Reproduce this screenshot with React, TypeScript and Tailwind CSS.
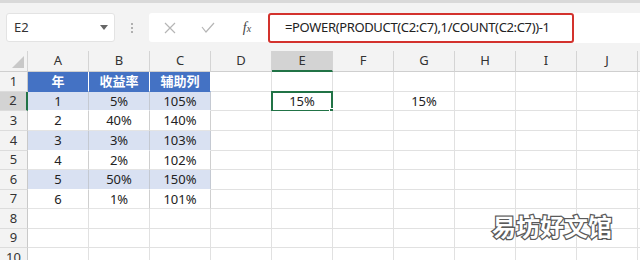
import React from "react";

const COLS = ["A", "B", "C", "D", "E", "F", "G", "H", "I", "J"];
const ROW_H = ["h-[20px]", "h-[19px]", "h-[20px]", "h-[20px]", "h-[19px]", "h-[20px]", "h-[19px]", "h-[20px]", "h-[19px]", "h-[20px]"];

const table: string[][] = [
  ["年", "收益率", "辅助列"],
  ["1", "5%", "105%"],
  ["2", "40%", "140%"],
  ["3", "3%", "103%"],
  ["4", "2%", "102%"],
  ["5", "50%", "150%"],
  ["6", "1%", "101%"],
];

function Cell({ r, c }: { r: number; c: number }) {
  const inTable = r < 7 && c < 3;
  let cls = "relative w-[61px] shrink-0 flex items-center justify-center border-r border-b ";
  let text = "";
  if (inTable) {
    text = table[r][c];
    if (r === 0) {
      cls += "bg-[#4472c4] text-white font-bold border-r-white border-b-[#4472c4] ";
    } else if (r % 2 === 1) {
      cls += "bg-[#d9e1f2] text-[#222] border-r-[#c4c9d2] border-b-[#ffffff] ";
    } else {
      cls += "bg-white text-[#222] border-r-[#cfcfcf] border-b-[#e4e4e4] ";
    }
    if (c === 2) cls += "border-r-[#a9a9a9] ";
    if (r === 6) cls += "border-b-[#bdbdbd] ";
  } else {
    cls += "bg-white border-r-[#e1e1e1] border-b-[#e1e1e1] text-[#222] ";
  }
  if (r === 1 && (c === 4 || c === 6)) text = "15%";
  return (
    <div className={cls}>
      <span className="leading-none">{text}</span>
      {r === 1 && c === 4 && (
        <div className="absolute -left-[1px] -top-[1px] w-[62px] h-[21px] border-2 border-[#217346]">
          <div className="absolute -right-[4px] -bottom-[4px] w-[6px] h-[6px] bg-[#217346] border border-white" />
        </div>
      )}
    </div>
  );
}

export default function App() {
  return (
    <div
      className="relative w-[640px] h-[260px] overflow-hidden bg-white text-[13px] text-[#222]"
      style={{ fontFamily: '"Noto Sans", "Noto Sans CJK SC", sans-serif' }}
    >
      {/* Toolbar */}
      <div className="h-[51px] bg-[#f3f3f3] border-t-[3px] border-t-[#d9d9d9] flex items-start pt-[10px] pl-[6px]">
        <div className="w-[109px] h-[29px] bg-white border border-[#e3e3e3] rounded-[3px] flex items-center justify-between pl-[7px] pr-[6px]">
          <span className="text-[13px] text-[#333]">E2</span>
          <svg width="8" height="5" viewBox="0 0 8 5">
            <path d="M0 0 L8 0 L4 5 Z" fill="#666" />
          </svg>
        </div>
        <div className="w-[34px] h-[29px] flex flex-col items-center justify-center gap-[2px]">
          <div className="w-[2px] h-[2px] bg-[#9a9a9a] rounded-full" />
          <div className="w-[2px] h-[2px] bg-[#9a9a9a] rounded-full" />
          <div className="w-[2px] h-[2px] bg-[#9a9a9a] rounded-full" />
        </div>
        <div className="w-[119px] h-[29px] bg-white rounded-l-[3px] flex items-center">
          <div className="w-[40px] flex justify-center pl-[2px]">
            <svg width="12" height="12" viewBox="0 0 12 12">
              <path d="M1 1 L11 11 M11 1 L1 11" stroke="#b5b5b5" strokeWidth="1.2" fill="none" />
            </svg>
          </div>
          <div className="w-[38px] flex justify-center">
            <svg width="14" height="11" viewBox="0 0 14 11">
              <path d="M1 5 L5 10 L13 1" stroke="#b5b5b5" strokeWidth="1.2" fill="none" />
            </svg>
          </div>
          <div className="w-[40px] flex justify-center">
            <span
              className="italic text-[14px] text-[#444] leading-none"
              style={{ fontFamily: '"Liberation Serif", serif' }}
            >
              f<span className="text-[10px]">x</span>
            </span>
          </div>
        </div>
        <div className="flex-1 h-[30px] bg-white flex">
          <div className="w-[306px] h-[30px] border-2 border-[#d3322d] rounded-[3px] flex items-center pl-[15px] text-[13px] text-[#222] tracking-[-0.35px]">
            =POWER(PRODUCT(C2:C7),1/COUNT(C2:C7))-1
          </div>
        </div>
      </div>

      {/* Column header */}
      <div className="flex h-[21px] bg-[#f3f3f3]">
        <div className="w-[28px] shrink-0 relative border-r border-[#d4d4d4] border-b border-b-[#cfcfcf]">
          <svg className="absolute right-[3px] bottom-[3px]" width="12" height="12" viewBox="0 0 12 12">
            <path d="M12 0 L12 12 L0 12 Z" fill="#c8c8c8" />
          </svg>
        </div>
        {COLS.map((c) => (
          <div
            key={c}
            className={
              "w-[61px] shrink-0 flex items-center justify-center border-r border-r-[#d4d4d4] text-[13px] text-[#333] " +
              (c === "E" ? "bg-[#d3d3d3] border-b-2 border-b-[#217346]" : "border-b border-b-[#cfcfcf]")
            }
          >
            {c}
          </div>
        ))}
        <div className="flex-1 border-b border-b-[#cfcfcf]" />
      </div>

      {/* Rows */}
      {ROW_H.map((h, r) => (
        <div key={r} className={"flex " + h}>
          <div
            className={
              "w-[28px] shrink-0 flex items-center justify-center border-b border-b-[#dcdcdc] text-[13px] text-[#333] " +
              (r === 1 ? "bg-[#d3d3d3] border-r-2 border-r-[#217346]" : "bg-[#f3f3f3] border-r border-r-[#c9c9c9]")
            }
          >
            {r + 1}
          </div>
          {COLS.map((_, c) => (
            <Cell key={c} r={r} c={c} />
          ))}
          <div className="flex-1 bg-white border-b border-b-[#e1e1e1]" />
        </div>
      ))}

      {/* Watermark */}
      <div
        className="absolute left-[492px] top-[214px] text-[24px] font-bold text-white tracking-[0px] leading-none [-webkit-text-stroke:2.5px_#5a5a5a] [paint-order:stroke_fill]"
        style={{ fontFamily: '"Noto Sans CJK SC", sans-serif' }}
      >
        易坊好文馆
      </div>
    </div>
  );
}
